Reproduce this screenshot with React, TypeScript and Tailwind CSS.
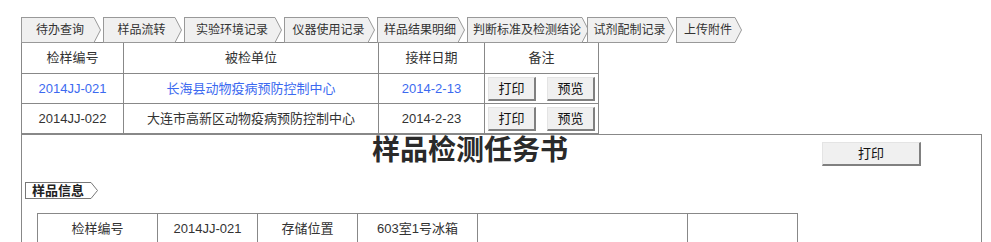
import React from 'react';

const FONT = 'font-["Liberation_Sans","Noto_Sans_CJK_SC",sans-serif]';

const tabs = [
  { label: '待办查询', w: 'w-[80px]' },
  { label: '样品流转', w: 'w-[79px]' },
  { label: '实验环境记录', w: 'w-[98px]' },
  { label: '仪器使用记录', w: 'w-[91px]' },
  { label: '样品结果明细', w: 'w-[88px]' },
  { label: '判断标准及检测结论', w: 'w-[118px]' },
  { label: '试剂配制记录', w: 'w-[87px]' },
  { label: '上传附件', w: 'w-[66px]' }
];

const rows = [
  { no: '2014JJ-021', unit: '长海县动物疫病预防控制中心', date: '2014-2-13', link: true },
  { no: '2014JJ-022', unit: '大连市高新区动物疫病预防控制中心', date: '2014-2-23', link: false }
];

// 右側箭頭(tab / 小標籤共用)
function Arrow({ h, fill, stroke }: { h: number; fill: string; stroke: string }) {
  return (
    <svg width={8} height={h} className="block shrink-0">
      <polyline
        points={`0,0.5 1,0.5 7.5,${h / 2} 1,${h - 0.5} 0,${h - 0.5}`}
        fill={fill}
        stroke={stroke}
        strokeWidth={1}
      />
    </svg>
  );
}

function Btn({ children, className = '' }: { children: React.ReactNode; className?: string }) {
  return (
    <button
      type="button"
      className={`h-[24px] bg-[#f0f0f0] border-t border-l border-[#e4e4e4] border-r-2 border-b-2 border-r-[#808080] border-b-[#808080] text-[13px] text-[#111] leading-none ${className}`}
    >
      {children}
    </button>
  );
}

export default function App() {
  return (
    <div className={`${FONT} pl-[21px] pt-[17px] bg-white w-[991px] h-[242px] overflow-hidden`}>
      {/* 頁籤 */}
      <div className="flex gap-[2px]">
        {tabs.map((t) => (
          <div key={t.label} className={`${t.w} flex h-[26px]`}>
            <div className="flex-1 flex items-center justify-center pl-[5px] bg-[#f0f0f0] border-l border-t border-b border-[#999] text-[12px] text-[#333] whitespace-nowrap">
              {t.label}
            </div>
            <Arrow h={26} fill="#f0f0f0" stroke="#999" />
          </div>
        ))}
      </div>

      {/* 列表 */}
      <table className="border-collapse text-[13px] text-[#333] -mt-px">
        <thead>
          <tr className="h-[31px]">
            <th className="w-[102px] border border-[#888] font-normal">检样编号</th>
            <th className="w-[255px] border border-[#888] font-normal">被检单位</th>
            <th className="w-[106px] border border-[#888] font-normal">接样日期</th>
            <th className="w-[114px] border border-[#888] font-normal">备注</th>
          </tr>
        </thead>
        <tbody>
          {rows.map((r) => (
            <tr key={r.no} className="h-[30px]">
              <td className={`border border-[#888] text-center ${r.link ? 'text-[#3c6af0]' : ''}`}>{r.no}</td>
              <td className={`border border-[#888] text-center ${r.link ? 'text-[#3c6af0]' : ''}`}>{r.unit}</td>
              <td className={`border border-[#888] text-center ${r.link ? 'text-[#3c6af0]' : ''}`}>{r.date}</td>
              <td className="border border-[#888]">
                <div className="flex justify-center gap-[11px]">
                  <Btn className="w-[48px]">打印</Btn>
                  <Btn className="w-[48px]">预览</Btn>
                </div>
              </td>
            </tr>
          ))}
        </tbody>
      </table>

      {/* 任務書 */}
      <div className="w-[961px] h-[200px] border border-[#888]">
        <div className="flex items-start">
          <h1 className="ml-[350px] text-[28px] leading-[32px] font-semibold text-[#2a2a2a]">
            样品检测任务书
          </h1>
          <Btn className="w-[99px] ml-auto mr-[60px] mt-[7px]">打印</Btn>
        </div>

        <div className="flex ml-[3px] mt-[15px] h-[17px]">
          <div className="w-[65px] flex items-center justify-center bg-white border-l border-t border-b border-[#777] text-[13px] font-bold text-[#222]">
            样品信息
          </div>
          <Arrow h={17} fill="#fff" stroke="#777" />
        </div>

        <table className="ml-[15px] mt-[14px] border-collapse text-[13px] text-[#333]">
          <tbody>
            <tr className="h-[30px]">
              <td className="w-[120px] border border-[#888] text-center">检样编号</td>
              <td className="w-[100px] border border-[#888] text-center">2014JJ-021</td>
              <td className="w-[100px] border border-[#888] text-center">存储位置</td>
              <td className="w-[120px] border border-[#888] text-center">603室1号冰箱</td>
              <td className="w-[210px] border border-[#888]"></td>
              <td className="w-[110px] border border-[#888]"></td>
            </tr>
          </tbody>
        </table>
      </div>
    </div>
  );
}
